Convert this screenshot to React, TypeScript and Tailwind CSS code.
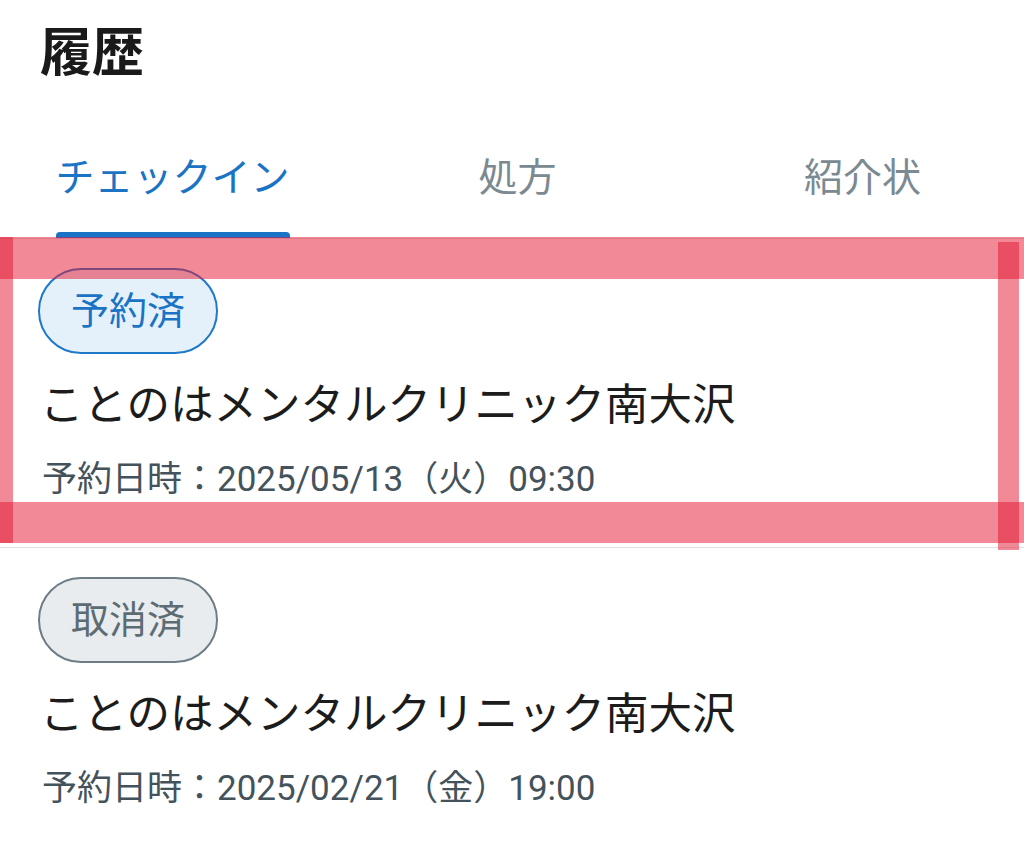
import React from "react";

const FONT = 'Roboto, "Noto Sans CJK JP", sans-serif';

type Item = { status: "booked" | "cancelled"; label: string; name: string; date: string };

const items: Item[] = [
  { status: "booked", label: "予約済", name: "ことのはメンタルクリニック南大沢", date: "予約日時：2025/05/13（火）09:30" },
  { status: "cancelled", label: "取消済", name: "ことのはメンタルクリニック南大沢", date: "予約日時：2025/02/21（金）19:00" },
];

function Pill({ item }: { item: Item }) {
  const booked = item.status === "booked";
  return (
    <div
      className={
        booked
          ? "h-[86px] w-[180px] rounded-full border-2 border-[#1f78c8] bg-[#e4f1fb] text-[#1a73c4] flex items-center justify-center text-[38px] leading-none"
          : "h-[86px] w-[180px] rounded-full border-2 border-[#6e7d85] bg-[#e8ecef] text-[#5d6b73] flex items-center justify-center text-[38px] leading-none"
      }
    >
      {item.label}
    </div>
  );
}

export default function App() {
  return (
    <div className="relative w-[1024px] h-[855px] overflow-hidden bg-white" style={{ fontFamily: FONT }}>
      <h1 className="pl-[40px] pt-[23px] text-[52px] leading-[62px] font-bold text-[#1a1a1a]">履歴</h1>

      <div className="grid grid-cols-[345px_345px_345px] pt-[68px] border-b border-[#dcdcdc]">
        <div className="flex flex-col items-center">
          <div className="text-[39px] leading-[50px] text-[#1a73c4]">チェックイン</div>
          <div className="mt-[29px] h-[6px] w-[234px] rounded-t-[4px] bg-[#1a73c4]" />
        </div>
        <div className="flex flex-col items-center">
          <div className="text-[39px] leading-[50px] text-[#7b8a91]">処方</div>
          <div className="mt-[29px] h-[6px]" />
        </div>
        <div className="flex flex-col items-center">
          <div className="text-[39px] leading-[50px] text-[#7b8a91]">紹介状</div>
          <div className="mt-[29px] h-[6px]" />
        </div>
      </div>

      {items.map((item, i) => (
        <div key={i} className="px-[38px] pt-[29px] pb-[43px] border-b border-[#e0e0e0]">
          <Pill item={item} />
          <div className="mt-[22px] pl-[2px] text-[43.5px] leading-[60px] text-[#1c1c1c]">{item.name}</div>
          <div className="mt-[20px] pl-[4px] text-[35px] leading-[48px] font-normal text-[#44535b]">{item.date}</div>
        </div>
      ))}

      {/* annotation highlight overlay */}
      <div className="pointer-events-none absolute left-0 top-[237px] h-[42px] w-[1024px] bg-[rgba(228,20,45,0.5)]" />
      <div className="pointer-events-none absolute left-0 top-[502px] h-[41px] w-[1024px] bg-[rgba(228,20,45,0.5)]" />
      <div className="pointer-events-none absolute left-0 top-[237px] h-[306px] w-[13px] bg-[rgba(228,20,45,0.5)]" />
      <div className="pointer-events-none absolute left-[998px] top-[242px] h-[308px] w-[21px] bg-[rgba(228,20,45,0.5)]" />
    </div>
  );
}
